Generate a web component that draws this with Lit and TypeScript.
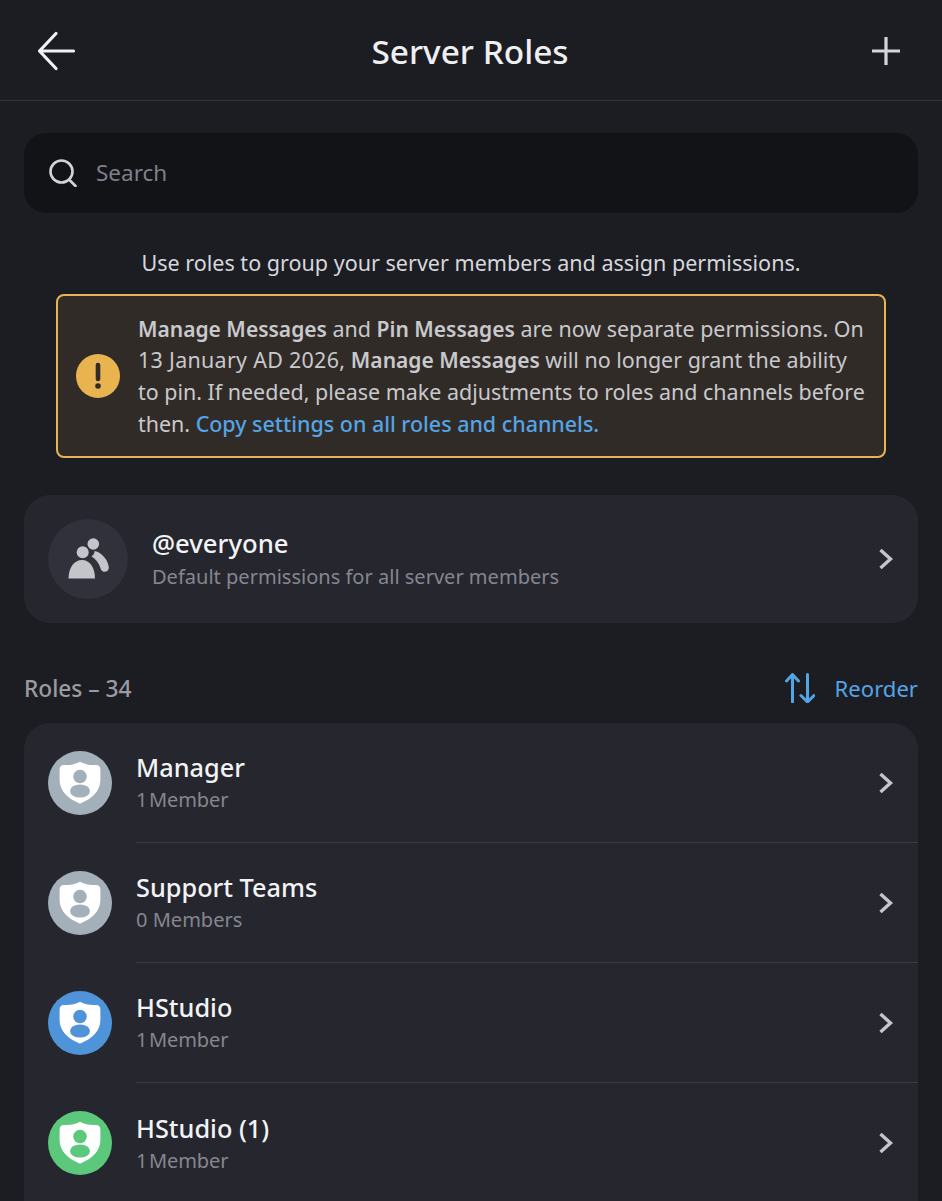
import { LitElement, html, css } from "lit";
import { customElement } from "lit/decorators.js";

const chevron = html`<svg class="chev" viewBox="0 0 16 24" width="16" height="24"><path d="M2.5 3 L12.5 12 L2.5 21" fill="none" stroke="#c4c5cb" stroke-width="3.4"/></svg>`;

const shield = (bg: string) => html`<svg class="rav" viewBox="0 0 64 64" width="64" height="64">
  <circle cx="32" cy="32" r="32" fill="${bg}"/>
  <path d="M32 10.8 C37 13.4 42 14.4 47.5 14 C50.8 13.8 52.4 15.6 52.4 19 L52.4 29 C52.4 40 44 47.5 33 52.3 C32.3 52.6 31.7 52.6 31 52.3 C20 47.5 11.6 40 11.6 29 L11.6 19 C11.6 15.6 13.2 13.8 16.5 14 C22 14.4 27 13.4 32 10.8 Z" fill="#fff"/>
  <circle cx="32" cy="25.5" r="6.8" fill="${bg}"/>
  <ellipse cx="32" cy="40" rx="10" ry="6.6" fill="${bg}"/>
</svg>`;

const roles = [
  { name: "Manager", sub: "1 Member", color: "#a3b0ba" },
  { name: "Support Teams", sub: "0 Members", color: "#a3b0ba" },
  { name: "HStudio", sub: "1 Member", color: "#4f94d8" },
  { name: "HStudio (1)", sub: "1 Member", color: "#5cc87c" },
];

@customElement("app-root")
export class AppRoot extends LitElement {
  static styles = css`
    :host { display: block; width: 942px; height: 1201px; overflow: hidden; background: #1c1d23; font-family: "Noto Sans", "Open Sans", sans-serif; color: #f2f3f5; }
    .head { height: 100px; box-sizing: border-box; padding: 2px 42px 0 36px; display: grid; grid-template-columns: 1fr auto 1fr; align-items: center; }
    .rule { height: 1px; background: #33343b; }
    .head svg { display: block; }
    .plus { justify-self: end; }
    .title { font-size: 33.4px; font-weight: 500; color: #eeeff1; margin-left: 4px; }
    .body { padding: 32px 24px 0; display: flex; flex-direction: column; }
    .search { height: 80px; border-radius: 22px; background: #121317; display: flex; align-items: center; gap: 19px; padding-left: 25px; font-size: 22.5px; color: #7f8088; }
    .search span { padding-bottom: 2px; }
    .desc { margin-top: 33px; height: 34px; line-height: 34px; text-align: center; font-size: 21.55px; color: #d6d7db; }
    .notice { margin: 14px 32px 0; height: 164px; box-sizing: border-box; border: 2px solid #e6b455; border-radius: 8px; background: #312b27; display: flex; align-items: center; gap: 18px; padding: 0 16px 0 18px; }
    .notice svg { flex: none; }
    .notice p { margin: 0; font-size: 21.45px; line-height: 31.67px; color: #c8c9cd; white-space: nowrap; }
    .notice b { font-weight: 600; font-size: 21px; line-height: 0; }
    .notice a { color: #54a4e6; font-weight: 500; }
    .date { letter-spacing: 0.3px; }
    .everyone { margin-top: 37px; height: 128px; border-radius: 26px; background: #25262e; display: flex; align-items: center; padding: 0 24px; }
    .eav { width: 80px; height: 80px; border-radius: 50%; background: #30313a; display: flex; align-items: center; justify-content: center; flex: none; }
    .etext { margin-left: 24px; flex: 1; padding-top: 1px; }
    .ename { font-size: 25.7px; line-height: 33px; font-weight: 500; color: #f2f3f5; }
    .esub { font-size: 20.05px; line-height: 30px; color: #85868e; margin-top: 2px; }
    .chev { flex: none; display: block; }
    .rh { margin-top: 47px; height: 36px; display: flex; align-items: center; justify-content: space-between; font-size: 22.7px; font-weight: 500; color: #9a9ba2; }
    .reorder { display: flex; align-items: center; gap: 20px; color: #54a4e6; font-weight: 400; font-size: 22.1px; }
    .list { margin-top: 17px; border-radius: 26px 26px 0 0; background: #25262e; }
    .row { height: 120px; display: flex; align-items: center; padding-left: 24px; }
    .rav { flex: none; display: block; }
    .rmain { margin-left: 24px; flex: 1; height: 120px; box-sizing: border-box; display: flex; align-items: center; padding-right: 24px; border-bottom: 1px solid #393a42; }
    .row:last-child .rmain { border-bottom: none; }
    .rtext { flex: 1; padding-top: 1px; }
    .rname { font-size: 25.3px; line-height: 32px; font-weight: 500; color: #f2f3f5; }
    .rsub { font-size: 20.05px; line-height: 30px; color: #85868e; margin-top: 2px; }
    .rsub.one { word-spacing: -3.5px; letter-spacing: -0.1px; }
  `;

  render() {
    return html`
      <div class="head">
        <svg viewBox="0 0 40 40" width="40" height="40"><path d="M20 2.5 L3.5 20 L20 37.5 M3.5 20 H37.5" fill="none" stroke="#f0f1f3" stroke-width="3.2" stroke-linecap="round" stroke-linejoin="round"/></svg>
        <div class="title">Server Roles</div>
        <svg class="plus" viewBox="0 0 28 28" width="28" height="28"><path d="M14 0 V28 M0 14 H28" fill="none" stroke="#d5d6da" stroke-width="3.2"/></svg>
      </div>
      <div class="rule"></div>
      <div class="body">
        <div class="search">
          <svg viewBox="0 0 28 28" width="28" height="28"><circle cx="12.5" cy="12.5" r="11" fill="none" stroke="#d2d3d7" stroke-width="2.6"/><path d="M20.5 21 L26.5 27" stroke="#d2d3d7" stroke-width="2.6" stroke-linecap="round"/></svg>
          <span>Search</span>
        </div>
        <div class="desc">Use roles to group your server members and assign permissions.</div>
        <div class="notice">
          <svg viewBox="0 0 44 44" width="44" height="44"><circle cx="22" cy="22" r="22" fill="#e9b44f"/><path d="M22 11 V25" stroke="#312b27" stroke-width="4.6" stroke-linecap="round"/><circle cx="22" cy="32" r="2.8" fill="#312b27"/></svg>
          <p><b>Manage Messages</b> and <b>Pin Messages</b> are now separate permissions. On<br><span class="date">13 January AD 2026,</span> <b>Manage Messages</b> will no longer grant the ability<br>to pin. If needed, please make adjustments to roles and channels before<br>then. <a>Copy settings on all roles and channels.</a></p>
        </div>
        <div class="everyone">
          <div class="eav">
            <svg viewBox="0 0 42 42" width="42" height="42">
              <circle cx="26.3" cy="6" r="5.8" fill="#c4c5cb"/>
              <circle cx="15.7" cy="14.3" r="6" fill="#c4c5cb"/>
              <path d="M1.5 40.5 C1.5 30 7 22 15 22 C23 22 28 30 28 40.5 Z" fill="#c4c5cb"/>
              <path d="M27.5 13 C35.5 14.5 41.5 23 41.8 29.5 C42 34.5 35.5 35.5 33.8 31 C32.5 27 30 21.5 24.5 18.5 C26.5 17 27.5 15.5 27.5 13 Z" fill="#c4c5cb"/>
            </svg>
          </div>
          <div class="etext">
            <div class="ename">@everyone</div>
            <div class="esub">Default permissions for all server members</div>
          </div>
          ${chevron}
        </div>
        <div class="rh">
          <span>Roles – 34</span>
          <span class="reorder">
            <svg viewBox="0 0 30 30" width="30" height="30"><g fill="none" stroke="#54a4e6" stroke-width="3" stroke-linecap="round" stroke-linejoin="round"><path d="M7.5 29 V1.5 M1.5 8 L7.5 1.5 L13.5 8"/><path d="M22.5 1.5 V29 M16 22.5 L22.5 29 L29 22.5"/></g></svg>
            Reorder
          </span>
        </div>
        <div class="list">
          ${roles.map((r) => html`<div class="row">
            ${shield(r.color)}
            <div class="rmain">
              <div class="rtext"><div class="rname">${r.name}</div><div class="rsub ${r.sub.startsWith("1 ") ? "one" : ""}">${r.sub}</div></div>
              ${chevron}
            </div>
          </div>`)}
        </div>
      </div>
    `;
  }
}
